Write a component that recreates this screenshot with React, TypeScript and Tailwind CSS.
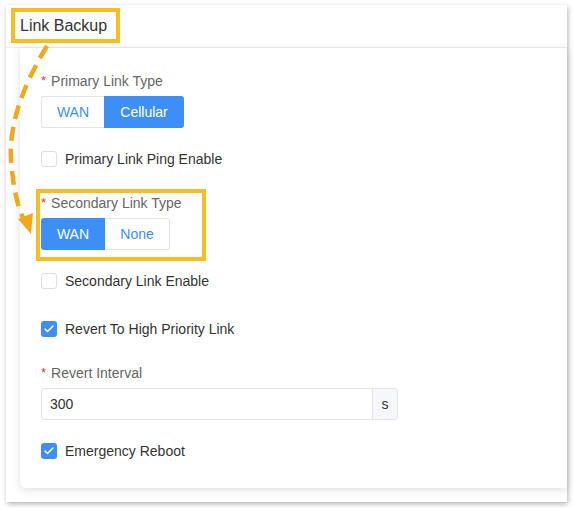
import { Check } from 'lucide-react';

const font = { fontFamily: '"Liberation Sans", Arial, sans-serif' };

function Label({ text }: { text: string }) {
  return (
    <div className="flex items-center h-[20px] text-[14px] text-[#666]">
      <span className="text-[#f23030] mr-[5px] text-[13px]">*</span>
      {text}
    </div>
  );
}

function Box({ checked, label }: { checked?: boolean; label: string }) {
  return (
    <div className="flex items-center h-[20px]">
      <span
        className={`w-[16px] h-[16px] rounded-[3px] flex items-center justify-center ${
          checked ? 'bg-[#3d8ff7]' : 'border border-[#dcdfe6] bg-white'
        }`}
      >
        {checked && <Check size={12} strokeWidth={3} color="#fff" />}
      </span>
      <span className="ml-[8px] text-[14px] text-[#333]">{label}</span>
    </div>
  );
}

function Toggle({ items, active }: { items: { t: string; w: string }[]; active: number }) {
  return (
    <div className="flex h-[32px] mt-[5px]">
      {items.map((it, i) => (
        <div
          key={it.t}
          className={`${it.w} flex items-center justify-center text-[14px] ${
            i === active
              ? 'bg-[#3d8ff7] text-white'
              : 'bg-white text-[#3d8ff7] border border-[#e2e4ea]'
          } ${i === 0 ? 'rounded-l-[3px]' : 'rounded-r-[3px]'} ${
            i === 0 && i !== active ? 'border-r-0' : ''
          } ${i === 1 && i !== active ? 'border-l-0' : ''}`}
        >
          {it.t}
        </div>
      ))}
    </div>
  );
}

export default function App() {
  return (
    <div className="relative w-[574px] h-[508px] bg-white overflow-hidden" style={font}>
      <div className="absolute left-[6px] top-[5px] w-[561px] h-[497px] bg-white shadow-[1px_2px_5px_rgba(0,0,0,0.3)] flex flex-col">
        <div className="h-[43px] border-b border-[#eeeeee] flex items-center pl-[14px] text-[16px] text-[#333]">
          Link Backup
        </div>
        <div className="pl-[14px] pb-[14px] flex-1 flex">
          <div className="flex-1 bg-white rounded-bl-[6px] shadow-[0_2px_8px_rgba(0,0,0,0.13)] pl-[21px] pt-[23px]">
            <Label text="Primary Link Type" />
            <Toggle
              items={[
                { t: 'WAN', w: 'w-[63px]' },
                { t: 'Cellular', w: 'w-[80px]' },
              ]}
              active={1}
            />
            <div className="mt-[21px]">
              <Box label="Primary Link Ping Enable" />
            </div>
            <div className="mt-[24px]">
              <Label text="Secondary Link Type" />
            </div>
            <Toggle
              items={[
                { t: 'WAN', w: 'w-[64px]' },
                { t: 'None', w: 'w-[65px]' },
              ]}
              active={0}
            />
            <div className="mt-[21px]">
              <Box label="Secondary Link Enable" />
            </div>
            <div className="mt-[28px]">
              <Box checked label="Revert To High Priority Link" />
            </div>
            <div className="mt-[24px]">
              <Label text="Revert Interval" />
            </div>
            <div className="mt-[5px] w-[357px] h-[32px] flex border border-[#e2e4ea] rounded-[3px]">
              <div className="flex-1 flex items-center pl-[8px] text-[14px] text-[#333]">300</div>
              <div className="w-[25px] bg-[#f5f7fa] border-l border-[#e2e4ea] flex items-center justify-center text-[14px] text-[#333] rounded-r-[3px]">
                s
              </div>
            </div>
            <div className="mt-[21px]">
              <Box checked label="Emergency Reboot" />
            </div>
          </div>
        </div>
      </div>

      {/* highlight overlays */}
      <div className="absolute left-[11px] top-[8px] w-[109px] h-[35px] border-[4px] border-[#f6be23]" />
      <div className="absolute left-[36px] top-[189px] w-[170px] h-[72px] border-[4px] border-[#f6be23]" />
      <svg className="absolute left-0 top-0" width="574" height="508">
        <path
          d="M47 46 Q 8 110 11 160 Q 14 200 24 220"
          fill="none"
          stroke="#f2a81d"
          strokeWidth="4.5"
          strokeDasharray="14 8"
        />
        <polygon points="18,219 33,213 31,234" fill="#f2a81d" />
      </svg>
    </div>
  );
}
